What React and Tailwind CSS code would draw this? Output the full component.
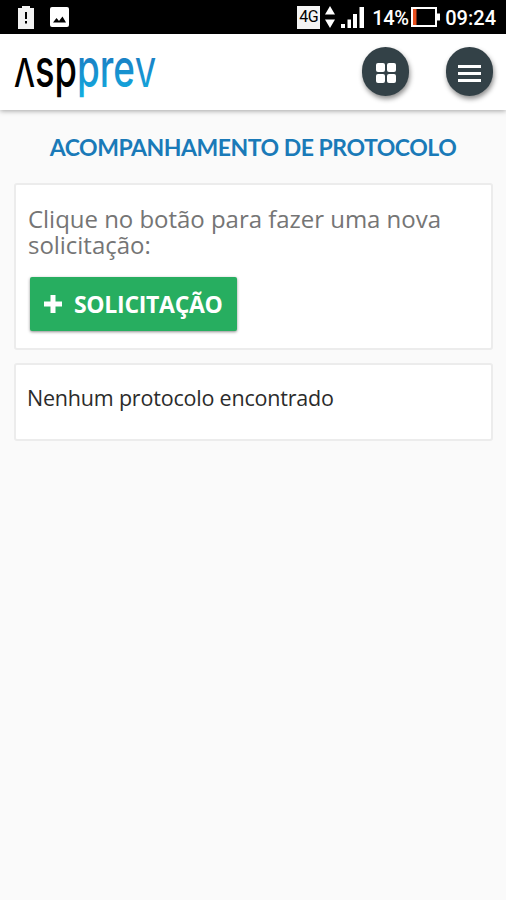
import { clsx } from 'clsx';

function StatusBar() {
  return (
    <div className="flex h-[34px] items-center bg-black pl-[18px] pr-[10px] text-white">
      <svg className="h-[23px] w-4" viewBox="0 0 16 23" fill="none">
        <path d="M4 0h8v2h4v21H0V2h4z" fill="#f2f2f2" />
        <path d="M8 6v7M8 15v2.5" stroke="#000" strokeWidth="2" />
      </svg>
      <svg className="ml-4 h-5 w-[19px]" viewBox="0 0 19 20">
        <rect width="19" height="20" rx="2" fill="#fff" />
        <path d="M3 15.500l3.500-4.500 2.500 3 3.500-4.500 3.500 6z" fill="#000" />
      </svg>
      <div className="ml-auto flex items-center">
        <span className="flex h-[23px] w-[23px] items-center justify-center bg-[#f4f4f4] font-['Roboto',sans-serif] text-[16px] tracking-[-0.5px] text-black">4G</span>
        <svg className="ml-[5px] h-[22px] w-[10px]" viewBox="0 0 10 22" fill="#fff">
          <path d="M5 0l5 8.500H0zM5 22L0 13.500h10z" />
        </svg>
        <svg className="ml-[6px] h-[21px] w-[23px]" viewBox="0 0 23 21" fill="#fff">
          <path d="M0 17h4v4H0zM6.500 12.500h3.500V21H6.500zM12 7h4v14h-4zM18.500 0h4.500v21h-4.500z" />
        </svg>
        <span className="ml-[8px] w-[38px] whitespace-nowrap pt-px font-['Roboto',sans-serif] text-[20px] font-medium leading-none tracking-[-0.4px]">14%</span>
        <svg className="ml-[1px] h-5 w-[29px]" viewBox="0 0 29 20">
          <rect x="1" y="1" width="24" height="18" fill="none" stroke="#fff" strokeWidth="2" />
          <path d="M26 6.500h3v7h-3z" fill="#fff" />
          <path d="M2 2h3.500v16H2z" fill="#e8501e" />
        </svg>
        <span className="ml-[5px] pt-px font-['Roboto',sans-serif] text-[20px] font-medium leading-none">09:24</span>
      </div>
    </div>
  );
}

function Logo() {
  return (
    <svg className="h-[60px] w-[144px] overflow-visible" viewBox="0 0 144 60" fontFamily="Inter, sans-serif" fontWeight="500">
      <defs>
        <linearGradient id="logoBlue" gradientUnits="userSpaceOnUse" x1="0" y1="15" x2="0" y2="56">
          <stop offset="0" stopColor="#1a7fc4" />
          <stop offset="1" stopColor="#12aee0" />
        </linearGradient>
      </defs>
      <g fill="#000">
        <text x="0" y="46" fontSize="39" textLength="21" lengthAdjust="spacingAndGlyphs">Λ</text>
        <text x="21" y="46" fontSize="53" textLength="42" lengthAdjust="spacingAndGlyphs">sp</text>
      </g>
      <g fill="url(#logoBlue)">
        <text x="63" y="46" fontSize="53" textLength="58" lengthAdjust="spacingAndGlyphs">pre</text>
        <text x="121" y="46" fontSize="39" textLength="21" lengthAdjust="spacingAndGlyphs">V</text>
      </g>
    </svg>
  );
}

function RoundButton({ label, className, children }) {
  return (
    <button
      aria-label={label}
      className={clsx('flex h-[49px] w-[47px] items-center justify-center rounded-full bg-[#334147] shadow-[1px_3px_5px_rgba(0,0,0,0.45)]', className)}
    >
      {children}
    </button>
  );
}

function Card({ className, children }) {
  return (
    <section className={clsx('rounded-[3px] border-2 border-[#ececec] bg-white px-[11px]', className)}>
      {children}
    </section>
  );
}

export default function App() {
  return (
    <div className="flex min-h-[900px] w-full flex-col bg-[#fafafa] font-['Open_Sans','Noto_Sans',sans-serif]">
      <StatusBar />
      <header className="flex h-[76px] items-center bg-white pb-0.5 pl-[14px] pr-[13px] shadow-[0_1px_5px_rgba(0,0,0,0.35)]">
        <Logo />
        <RoundButton label="Aplicativos" className="ml-auto">
          <svg className="mt-[3px] h-5 w-5" viewBox="0 0 20 20" fill="#fff">
            <rect width="9" height="9" rx="2" />
            <rect x="11" width="9" height="9" rx="2" />
            <rect y="11" width="9" height="9" rx="2" />
            <rect x="11" y="11" width="9" height="9" rx="2" />
          </svg>
        </RoundButton>
        <RoundButton label="Menu" className="ml-[37px]">
          <svg className="mt-[4px] h-[17px] w-[23px]" viewBox="0 0 23 17" fill="#fff">
            <path d="M0 0h23v3H0zM0 7h23v3H0zM0 14h23v3H0z" />
          </svg>
        </RoundButton>
      </header>

      <main className="px-[14px]">
        <h1 className="mt-[22px] text-center font-['Lato',sans-serif] text-[23px] font-bold leading-[30px] tracking-[-0.48px] text-[#1a7ab8]">
          ACOMPANHAMENTO DE PROTOCOLO
        </h1>

        <Card className="mt-[21px] h-[167px] w-[479px] pt-[21px]">
          <p className="pl-px text-[24px] leading-[25.500px] tracking-[-0.03px] text-[#757575]">
            Clique no botão para fazer uma nova solicitação:
          </p>
          <button className="ml-[3px] mt-5 flex h-[54px] w-[207px] items-center rounded-[2px] bg-[#27ae60] pl-[14px] text-white shadow-[0_1px_3px_rgba(0,0,0,0.45)]">
            <svg className="h-[18px] w-[18px]" viewBox="0 0 18 18">
              <path d="M9 0v18M0 9h18" stroke="#fff" strokeWidth="5" />
            </svg>
            <span className="ml-3 text-[23px] font-bold tracking-[-0.3px]">SOLICITAÇÃO</span>
          </button>
        </Card>

        <Card className="mt-[13px] h-[78px] w-[479px] pt-[18px]">
          <p className="text-[21.500px] leading-[30px] tracking-[-0.2px] text-[#2b2b2b]">Nenhum protocolo encontrado</p>
        </Card>
      </main>
    </div>
  );
}
